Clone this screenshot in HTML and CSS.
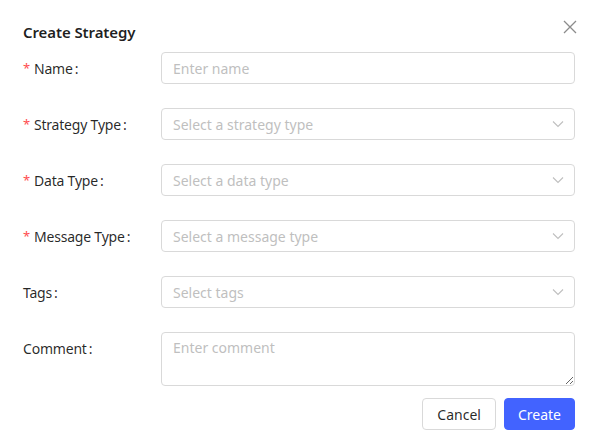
FILE: index.html
```html
<!DOCTYPE html>
<html lang="en">
<head>
    <meta charset="UTF-8">
    <meta name="viewport" content="width=device-width, initial-scale=1.0">
    <title>Create Strategy</title>
    <link rel="stylesheet" href="styles.css">
</head>
<body>
    <div class="modal">
        <div class="modal-header">
            <h2>Create Strategy</h2>
            <button class="close-btn" aria-label="Close">
                <svg width="14" height="14" viewBox="0 0 14 14">
                    <path d="M1 1 L13 13 M13 1 L1 13" stroke="#8c8c8c" stroke-width="1.3" fill="none"/>
                </svg>
            </button>
        </div>

        <form class="form">
            <label class="form-label required">Name</label>
            <input type="text" class="form-input" placeholder="Enter name">

            <label class="form-label required">Strategy Type</label>
            <div class="form-select">
                <span class="placeholder">Select a strategy type</span>
                <svg class="chevron" width="12" height="12" viewBox="0 0 12 12"><path d="M1 3.5 L6 8.5 L11 3.5" stroke="#bfbfbf" stroke-width="1.1" fill="none"/></svg>
            </div>

            <label class="form-label required">Data Type</label>
            <div class="form-select">
                <span class="placeholder">Select a data type</span>
                <svg class="chevron" width="12" height="12" viewBox="0 0 12 12"><path d="M1 3.5 L6 8.5 L11 3.5" stroke="#bfbfbf" stroke-width="1.1" fill="none"/></svg>
            </div>

            <label class="form-label required">Message Type</label>
            <div class="form-select">
                <span class="placeholder">Select a message type</span>
                <svg class="chevron" width="12" height="12" viewBox="0 0 12 12"><path d="M1 3.5 L6 8.5 L11 3.5" stroke="#bfbfbf" stroke-width="1.1" fill="none"/></svg>
            </div>

            <label class="form-label">Tags</label>
            <div class="form-select">
                <span class="placeholder">Select tags</span>
                <svg class="chevron" width="12" height="12" viewBox="0 0 12 12"><path d="M1 3.5 L6 8.5 L11 3.5" stroke="#bfbfbf" stroke-width="1.1" fill="none"/></svg>
            </div>

            <label class="form-label label-top">Comment</label>
            <textarea class="form-input form-textarea" placeholder="Enter comment"></textarea>
        </form>

        <div class="modal-footer">
            <button class="btn">Cancel</button>
            <button class="btn btn-primary">Create</button>
        </div>
    </div>
</body>
</html>
```

FILE: styles.css
```css
html, body {
    margin: 0;
    background: #fff;
}
body {
    font-family: "Noto Sans", "Open Sans", sans-serif;
    font-size: 14px;
    color: rgba(0, 0, 0, 0.85);
}
.modal {
    width: 598px;
    height: 448px;
    box-sizing: border-box;
    padding: 21px 23px 0 23px;
    background: #fff;
}
.modal-header {
    display: flex;
    justify-content: space-between;
    align-items: flex-start;
    margin-bottom: 9px;
}
.modal-header h2 {
    margin: 0;
    font-size: 15px;
    line-height: 22px;
    font-weight: 600;
    letter-spacing: -0.1px;
    color: rgba(0, 0, 0, 0.88);
}
.close-btn {
    border: none;
    background: none;
    padding: 0;
    margin: -1px -2px 0 0;
    width: 14px;
    height: 14px;
    cursor: pointer;
}
.close-btn svg {
    display: block;
}
.form {
    display: grid;
    grid-template-columns: 138px 1fr;
    row-gap: 24px;
}
.form-label {
    display: flex;
    align-items: center;
    height: 32px;
    letter-spacing: -0.2px;
    color: rgba(0, 0, 0, 0.85);
}
.form-label::after {
    content: ":";
    margin-left: 2px;
}
.form-label.required::before {
    content: "*";
    color: #ff4d4f;
    margin-right: 4px;
    font-size: 13px;
}
.label-top {
    align-self: start;
}
.form-input, .form-select {
    box-sizing: border-box;
    height: 32px;
    width: 100%;
    padding: 0 11px;
    border: 1px solid #d9d9d9;
    border-radius: 4px;
    font-family: inherit;
    font-size: 14px;
    color: rgba(0, 0, 0, 0.85);
    background: #fff;
    outline: none;
}
.form-input::placeholder {
    color: #bfbfbf;
}
.form-select {
    display: flex;
    align-items: center;
    justify-content: space-between;
}
.form-select .placeholder {
    color: #bfbfbf;
}
.chevron {
    display: block;
    margin-right: -1px;
}
.form-textarea {
    height: 54px;
    padding: 4px 11px;
    resize: vertical;
    line-height: 22px;
}
.modal-footer {
    display: flex;
    justify-content: flex-end;
    gap: 8px;
    margin-top: 12px;
}
.btn {
    height: 32px;
    padding: 0 14px;
    border: 1px solid #d9d9d9;
    border-radius: 4px;
    background: #fff;
    font-family: inherit;
    font-size: 14px;
    color: rgba(0, 0, 0, 0.85);
    cursor: pointer;
}
.btn-primary {
    padding: 0 13px;
    background: #4263ff;
    border-color: #4263ff;
    color: #fff;
}
```
